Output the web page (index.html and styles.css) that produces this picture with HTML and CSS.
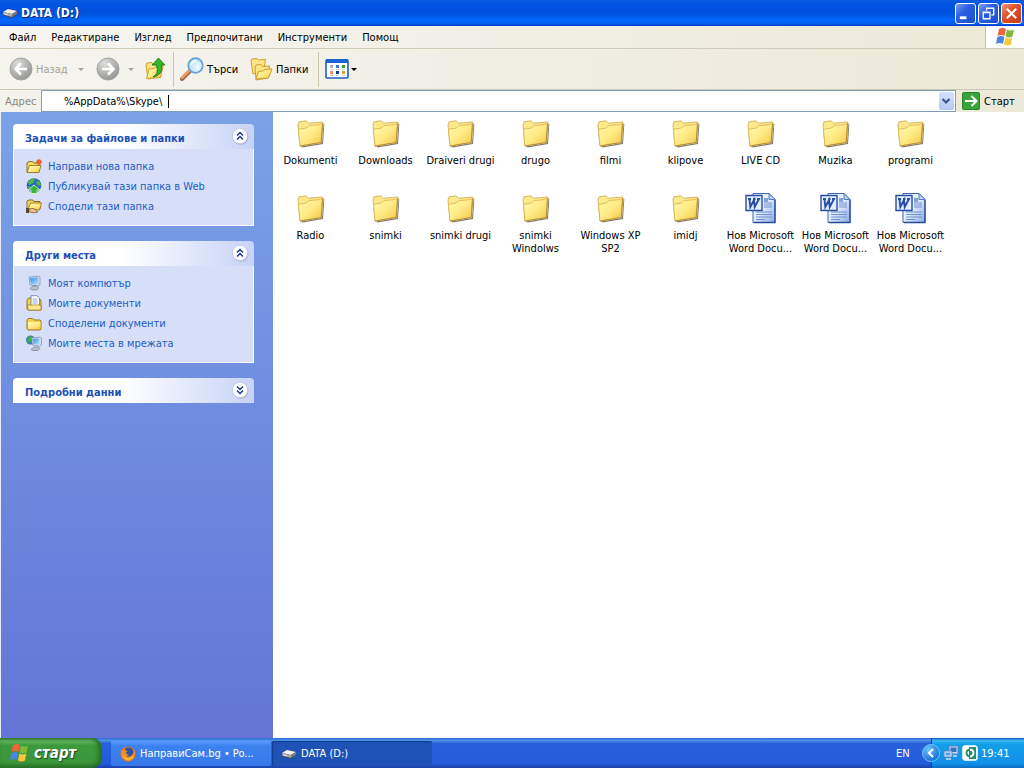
FILE: index.html
```html
<!DOCTYPE html>
<html lang="bg">
<head>
<meta charset="utf-8">
<title>DATA (D:)</title>
<link rel="stylesheet" href="styles.css">
</head>
<body>
<svg class="defs" aria-hidden="true">
  <defs>
    <linearGradient id="gFolder" x1="0" y1="0" x2="1" y2="1"><stop offset="0" stop-color="#fffbb4"/><stop offset=".5" stop-color="#ffeb86"/><stop offset="1" stop-color="#f1c645"/></linearGradient>
    <linearGradient id="gPage" x1="0" y1="0" x2="1" y2="1"><stop offset="0" stop-color="#fff"/><stop offset=".5" stop-color="#dfeaff"/><stop offset="1" stop-color="#88a9e4"/></linearGradient>
    <radialGradient id="gGrey" cx=".35" cy=".25" r=".85"><stop offset="0" stop-color="#dedede"/><stop offset=".5" stop-color="#b5b5b3"/><stop offset="1" stop-color="#8f8f8d"/></radialGradient>
    <radialGradient id="gLens" cx=".65" cy=".6" r=".7"><stop offset="0" stop-color="#f4fdff"/><stop offset="1" stop-color="#a6d8f8"/></radialGradient>
    <linearGradient id="gScreen" x1="0" y1="0" x2="1" y2="1"><stop offset="0" stop-color="#3c8be6"/><stop offset="1" stop-color="#b4e4ff"/></linearGradient>
    <radialGradient id="gTray" cx=".35" cy=".3" r=".8"><stop offset="0" stop-color="#6cc4ff"/><stop offset="1" stop-color="#0964d0"/></radialGradient>
  </defs>
  <symbol id="folder" viewBox="0 0 32 32">
    <path d="M6 29.500l21-3.500 1.500-19.500.8.500-1.300 20-20.500 3.500z" fill="#5d5540" opacity=".8"/>
    <path d="M3 8l1-3.200 7-1 2.500 2.400 14-1.200.5 1-1.500 19L5 29z" fill="#fbe98b" stroke="#cba94c" stroke-width=".8"/>
    <path d="M3.500 12.300l8-1.300 2.500-2.500 10-.8 3.500-1.400-1.300 19.200L5 29z" fill="url(#gFolder)" stroke="#dcb047" stroke-width=".8"/>
    <path d="M5 29l21.200-3.500L27.500 6.500" stroke="#a88432" stroke-width=".8" fill="none"/>
  </symbol>
  <symbol id="word" viewBox="0 0 32 32">
    <path d="M8 1.500h16l6 6v23H8z" fill="url(#gPage)" stroke="#3f66b3"/>
    <path d="M30 8v22.500H9" fill="none" stroke="#274b9b" stroke-width="1.300"/>
    <path d="M24 1.500v6h6z" fill="#bcd2f8" stroke="#3f66b3" stroke-width=".8"/>
    <path d="M19 11h8M19 13h8M19 15h8M11 20h16M11 22.500h16M11 25h16M11 27.500h9" stroke="#7292cc"/>
    <path d="M19 6h4v4h-4z" fill="#83a3df"/>
    <path d="M1 3.500h16v15H1z" fill="#e5efff" stroke="#274da4" stroke-width="1.400"/>
    <path d="M3 7h3M4.500 7l.8 8L9 8l.7 7L14 7h-2M8 7h2.500" fill="none" stroke="#2a4da5" stroke-width="1.900"/>
  </symbol>
  <symbol id="drive" viewBox="0 0 16 16">
    <path d="M1 7l5-3 9 2v3l-5 4-9-3z" fill="#444"/>
    <path d="M1 7l5-3 9 2-5 3z" fill="#f2f2ef"/>
    <path d="M1 7l9 2v3L1 9.500z" fill="#aaa"/><path d="M10 9l5-3v3l-5 3z" fill="#777"/>
    <path d="M2.500 9l3 .8" stroke="#eee"/>
  </symbol>
  <symbol id="flag" viewBox="0 0 20 20">
    <path d="M4 2q4-2 7 0L9.500 9q-3-2-7 0z" fill="#ee6537"/>
    <path d="M12 2.500q3 2 7 0L17.500 9.500q-4 2-7 0z" fill="#7fb83b"/>
    <path d="M2.300 10q4-2 7 0L8 17q-3-2-7 0z" fill="#4a85dc"/>
    <path d="M10.300 10.500q3 2 7 0L16 17.500q-4 2-7 0z" fill="#f9c73c"/>
  </symbol>
  <symbol id="chevs" viewBox="0 0 18 18">
    <circle cx="9.500" cy="9.800" r="8" fill="#7e8bbd" opacity=".5"/>
    <circle cx="9" cy="9" r="7.700" fill="#fff" stroke="#b5bfdf" stroke-width=".7"/>
    <path d="M6 8.500l3-3 3 3M6 12.500l3-3 3 3" fill="none" stroke="#173b92" stroke-width="1.500"/>
  </symbol>
  <symbol id="smallfolder" viewBox="0 0 16 16">
    <path d="M1 13.500V5l1.500-1.500h4L8 5h6l1 1v8l-1 1H2z" fill="#f5d250" stroke="#9c7416"/>
    <path d="M2 7h12.500v7H2z" fill="url(#gFolder)"/>
  </symbol>
  <symbol id="newfolder" viewBox="0 0 16 16">
    <path d="M1 14V5l2-1.500h3.500L8 5h5v9z" fill="#f6d763" stroke="#8e6a1a"/>
    <path d="M1 14.500l2.500-7H15l-2 7z" fill="url(#gFolder)" stroke="#8e6a1a" stroke-width=".8"/>
    <path d="M13 1v6M10 4h6M11 2l4 4M15 2l-4 4" stroke="#e8632b" stroke-width="1.300"/>
  </symbol>
  <symbol id="web" viewBox="0 0 16 16">
    <circle cx="8" cy="7.500" r="7.300" fill="#2866bc"/>
    <path d="M2 4q3-4 7-3l-2 4-4 2zM10 3l4 1 1 4-4-1zM1 8l4 1v4z" fill="#55b843"/>
    <path d="M8 7l6 5h-3v3.500H5V12H2z" fill="#35b634" stroke="#e4f7df" stroke-width=".8"/>
  </symbol>
  <symbol id="share" viewBox="0 0 16 16">
    <path d="M1 11V3l2-1h4l1 1.500h6V11z" fill="#f6d763" stroke="#8e6a1a"/>
    <path d="M2 11l2.500-6H15.500l-2 7z" fill="url(#gFolder)" stroke="#8e6a1a" stroke-width=".8"/>
    <path d="M0 10h3v5H0z" fill="#5b4a33"/><path d="M3 11l5-.5 4 3.500-4 .8-5-1z" fill="#f0c08b" stroke="#6f4a24" stroke-width=".7"/>
  </symbol>
  <symbol id="computer" viewBox="0 0 16 16">
    <path d="M3 2l9-1 2 1v8l-2 1-8-1z" fill="#d2dcec" stroke="#7c8db0" stroke-width=".7"/>
    <path d="M4 3l8-.7.5 7.700L5 9z" fill="url(#gScreen)"/>
    <path d="M7 11h4l2 2-2 2H6l-2-1.500z" fill="#b9bfcd" stroke="#6d7486" stroke-width=".6"/>
  </symbol>
  <symbol id="docs" viewBox="0 0 16 16">
    <path d="M1 14V5l1.500-2H5l1 1h8l1 2v9H2z" fill="#f5d250" stroke="#9c7416"/>
    <path d="M5 .7h6L13.500 3v8H5z" fill="#fff" stroke="#5a76ad" stroke-width=".8"/>
    <path d="M6.500 4h5M6.500 6h5M6.500 8h5" stroke="#7696d0" stroke-width=".8"/>
    <path d="M1.500 10h13.500v5H2z" fill="#fce98d" stroke="#9c7416" stroke-width=".7"/>
  </symbol>
  <symbol id="net" viewBox="0 0 16 16">
    <circle cx="4.500" cy="5" r="4.500" fill="#2f7bc4"/><path d="M1 4l3-3 3 2-2 4-3 1z" fill="#43ae45"/>
    <path d="M5.500 3l8-1 2 1v7l-2 1.300-7-1.300z" fill="#d2dcec" stroke="#7c8db0" stroke-width=".7"/>
    <path d="M6.500 4l6.500-.8.500 6.500L7.500 9z" fill="url(#gScreen)"/>
    <path d="M8 12h4l2 1.500-2 2H7l-2-1z" fill="#b9bfcd" stroke="#6d7486" stroke-width=".6"/>
  </symbol>
</svg>

<div class="window">
  <header class="titlebar">
    <svg class="i16"><use href="#drive"/></svg>
    <h1 class="title">DATA (D:)</h1>
    <div class="winbtns">
      <button class="winbtn" aria-label="Minimize"><svg viewBox="0 0 20 20"><path d="M4 13h7v3H4z" fill="#fff"/></svg></button>
      <button class="winbtn" aria-label="Restore"><svg viewBox="0 0 20 20"><path d="M8 7V4.500h7.500v7H13M7.500 4.500h8.500" fill="none" stroke="#fff" stroke-width="1.400"/><path d="M4.500 8.500h7v7h-7zM4 9h8" fill="none" stroke="#fff" stroke-width="1.400"/></svg></button>
      <button class="winbtn close" aria-label="Close"><svg viewBox="0 0 20 20"><path d="M5 5l10 10M15 5L5 15" stroke="#fff" stroke-width="2.200"/></svg></button>
    </div>
  </header>

  <nav class="menubar">
    <button>Файл</button><button>Редактиране</button><button>Изглед</button><button>Предпочитани</button><button>Инструменти</button><button>Помощ</button>
    <div class="brand"><svg class="i20"><use href="#flag"/></svg></div>
  </nav>

  <div class="toolbar">
    <button class="tool back" disabled>
      <svg class="i24" viewBox="0 0 24 24"><circle cx="12" cy="12" r="11" fill="url(#gGrey)" stroke="#a3a3a1"/><path d="M18 12H7M12 6.500L6.500 12l5.500 5.500" fill="none" stroke="#fff" stroke-width="2.600"/></svg>
      <span>Назад</span><i class="arrow"></i>
    </button>
    <button class="tool forward" disabled aria-label="Напред">
      <svg class="i24" viewBox="0 0 24 24"><circle cx="12" cy="12" r="11" fill="url(#gGrey)" stroke="#a3a3a1"/><path d="M6 12h11M12 6.500l5.500 5.500-5.500 5.500" fill="none" stroke="#fff" stroke-width="2.600"/></svg>
      <i class="arrow"></i>
    </button>
    <button class="tool up" aria-label="Нагоре">
      <svg class="i24" viewBox="0 0 24 24"><path d="M3 8l1-2 5-.5 1.500 2L20 7l-2.500 13L5 22z" fill="#fbe486" stroke="#cf9f2d"/><path d="M3.500 21.500L6 12l5-.5 2-1.500 7-.5-2.500 11z" fill="url(#gFolder)" stroke="#cf9f2d"/><path d="M10 20q6-3 3.500-12H9l6.500-7L22 8h-3.500q2 10-8.500 12z" fill="#35b22e" stroke="#167318" stroke-width=".8"/></svg>
    </button>
    <span class="sep"></span>
    <button class="tool search">
      <svg class="i24" viewBox="0 0 24 24"><path d="M10 14l-8 8" stroke="#a8643a" stroke-width="4" stroke-linecap="round"/><path d="M9.500 13.500l-7.500 7.500" stroke="#f0a36b" stroke-width="2" stroke-linecap="round"/><circle cx="15.500" cy="8.500" r="7.300" fill="url(#gLens)" stroke="#6b9fd6" stroke-width="1.700"/><path d="M11 8q1-4 5-4" fill="none" stroke="#fff" stroke-width="1.500"/></svg>
      <span>Търси</span>
    </button>
    <button class="tool folders">
      <svg class="i24" viewBox="0 0 24 24"><path d="M2 4l1-2 5-.5L9.500 3l7-.5-2 12L4 17z" fill="#fbe486" stroke="#cf9f2d"/><path d="M6 10l1-2 5-.5 1.500 2 7-.5-1.500 12-12 2z" fill="#fbe486" stroke="#cf9f2d"/><path d="M7 22l2.500-7.500 4.500-.5 2-1.500 7-.5-3.500 9z" fill="url(#gFolder)" stroke="#cf9f2d"/></svg>
      <span>Папки</span>
    </button>
    <span class="sep"></span>
    <button class="tool views" aria-label="Изгледи">
      <svg class="i24" viewBox="0 0 24 24"><rect x="1" y="3" width="22" height="18" rx="1" fill="#fff" stroke="#1f5fc0" stroke-width="1.600"/><path d="M1 2h22v4H1z" fill="#1c62cf"/><g><path d="M5 8h3v3H5z" fill="#a8aec4"/><path d="M11 8h3v3h-3z" fill="#3e76d8"/><path d="M17 8h3v3h-3z" fill="#36962f"/><path d="M5 14h3v3H5z" fill="#f0876a"/><path d="M11 14h3v3h-3z" fill="#16368f"/><path d="M17 14h3v3h-3z" fill="#d0a03a"/></g><path d="M5 12.500h3M11 12.500h3M17 12.500h3M5 18.500h3M11 18.500h3M17 18.500h3" stroke="#ccd"/></svg>
      <i class="arrow"></i>
    </button>
  </div>

  <div class="addressbar">
    <label for="addr">Адрес</label>
    <div class="combo">
      <input id="addr" type="text" value="%AppData%\Skype\"><span class="caret"></span>
      <button class="drop" aria-label="Разгъване"><svg viewBox="0 0 14 16"><path d="M3.500 6L7 9.500 10.500 6" fill="none" stroke="#3c5591" stroke-width="2.200"/></svg></button>
    </div>
    <button class="go"><svg viewBox="0 0 18 18"><rect width="18" height="18" rx="2" fill="#38a33b"/><rect x=".5" y=".5" width="17" height="17" rx="2" fill="none" stroke="#2a8235"/><path d="M3 9h11M9.500 4l5 5-5 5" fill="none" stroke="#fff" stroke-width="2"/></svg><span>Старт</span></button>
  </div>

  <div class="main">
    <aside class="side">
      <section class="panel">
        <button class="phead"><span>Задачи за файлове и папки</span><svg><use href="#chevs"/></svg></button>
        <div class="pbody">
          <a href="#"><svg class="i16"><use href="#newfolder"/></svg>Направи нова папка</a>
          <a href="#"><svg class="i16"><use href="#web"/></svg>Публикувай тази папка в Web</a>
          <a href="#"><svg class="i16"><use href="#share"/></svg>Сподели тази папка</a>
        </div>
      </section>
      <section class="panel">
        <button class="phead"><span>Други места</span><svg><use href="#chevs"/></svg></button>
        <div class="pbody">
          <a href="#"><svg class="i16"><use href="#computer"/></svg>Моят компютър</a>
          <a href="#"><svg class="i16"><use href="#docs"/></svg>Моите документи</a>
          <a href="#"><svg class="i16"><use href="#smallfolder"/></svg>Споделени документи</a>
          <a href="#"><svg class="i16"><use href="#net"/></svg>Моите места в мрежата</a>
        </div>
      </section>
      <section class="panel">
        <button class="phead"><span>Подробни данни</span><svg viewBox="0 0 18 18"><circle cx="9.500" cy="9.800" r="8" fill="#7e8bbd" opacity=".5"/><circle cx="9" cy="9" r="7.700" fill="#fff" stroke="#b5bfdf" stroke-width=".7"/><path d="M6 5.500l3 3 3-3M6 9.500l3 3 3-3" fill="none" stroke="#173b92" stroke-width="1.500"/></svg></button>
      </section>
    </aside>

    <main class="files">
      <div class="file"><svg><use href="#folder"/></svg><span>Dokumenti</span></div>
      <div class="file"><svg><use href="#folder"/></svg><span>Downloads</span></div>
      <div class="file"><svg><use href="#folder"/></svg><span>Draiveri drugi</span></div>
      <div class="file"><svg><use href="#folder"/></svg><span>drugo</span></div>
      <div class="file"><svg><use href="#folder"/></svg><span>filmi</span></div>
      <div class="file"><svg><use href="#folder"/></svg><span>klipove</span></div>
      <div class="file"><svg><use href="#folder"/></svg><span>LIVE CD</span></div>
      <div class="file"><svg><use href="#folder"/></svg><span>Muzika</span></div>
      <div class="file"><svg><use href="#folder"/></svg><span>programi</span></div>
      <div class="file"><svg><use href="#folder"/></svg><span>Radio</span></div>
      <div class="file"><svg><use href="#folder"/></svg><span>snimki</span></div>
      <div class="file"><svg><use href="#folder"/></svg><span>snimki drugi</span></div>
      <div class="file"><svg><use href="#folder"/></svg><span>snimki<br>Windolws</span></div>
      <div class="file"><svg><use href="#folder"/></svg><span>Windows XP<br>SP2</span></div>
      <div class="file"><svg><use href="#folder"/></svg><span>imidj</span></div>
      <div class="file"><svg><use href="#word"/></svg><span>Нов Microsoft<br>Word Docu...</span></div>
      <div class="file"><svg><use href="#word"/></svg><span>Нов Microsoft<br>Word Docu...</span></div>
      <div class="file"><svg><use href="#word"/></svg><span>Нов Microsoft<br>Word Docu...</span></div>
    </main>
  </div>

  <footer class="taskbar">
    <button class="start"><svg class="i20"><use href="#flag"/></svg><span>старт</span></button>
    <div class="tasks">
      <button class="task"><svg class="i16" viewBox="0 0 16 16"><circle cx="8" cy="8" r="7.500" fill="#e8701a"/><circle cx="8.500" cy="6.500" r="5" fill="#2b55a8"/><path d="M1 3q-1 8 4 11 6 3 9-3 2-4 0-8 0 4-2 6-3 3-6 1 2 0 3-1.500-3 0-3-2l2-1.500Q5 5 5 3 3 3 2 5z" fill="#f58b1f"/><path d="M2 9q2 5 7 5 4-1 5-5-3 4-7 3-3-1-5-3z" fill="#fbc13a"/></svg><span>НаправиСам.bg • Po...</span></button>
      <button class="task active"><svg class="i16"><use href="#drive"/></svg><span>DATA (D:)</span></button>
    </div>
    <span class="lang">EN</span>
    <div class="tray">
      <button class="hide" aria-label="Скриване"><svg viewBox="0 0 18 18"><circle cx="9" cy="9" r="8.500" fill="url(#gTray)" stroke="#86d2ff" stroke-width=".8"/><path d="M11 5L7 9l4 4" fill="none" stroke="#fff" stroke-width="2"/></svg></button>
      <svg class="i16" viewBox="0 0 16 16"><path d="M6 1h9v8H6z" fill="#c8dcf5" stroke="#5f86bd"/><path d="M7.500 2.500h6V7h-6z" fill="#3471c9"/><path d="M1 6h8v6H1z" fill="#dcecff" stroke="#5f86bd"/><path d="M2.500 7.500h5v3h-5z" fill="#5b9be8"/><path d="M3 14h5M10 11h4" stroke="#cfdcf0" stroke-width="1.500"/></svg>
      <svg class="i16" viewBox="0 0 16 16"><rect x=".7" y=".7" width="14.600" height="14.600" rx="2" fill="#fff" stroke="#e5fff5"/><path d="M8 2h6v12H8z" fill="#23916d"/><path d="M8 4.500Q4.500 5 4.500 8T8 11.500" fill="none" stroke="#23916d" stroke-width="1.800"/><path d="M8 4.500Q11.500 5 11.500 8T8 11.500" fill="none" stroke="#fff" stroke-width="1.800"/><path d="M7.500 2v12" stroke="#23916d"/></svg>
      <time>19:41</time>
    </div>
  </footer>
</div>
</body>
</html>
```
FILE: styles.css
```css
* { box-sizing: border-box; }
body {
  margin: 0;
  font: 11px/13px "DejaVu Sans Condensed", "DejaVu Sans", sans-serif;
  color: #000;
}
button { font: inherit; color: inherit; border: 0; background: none; padding: 0; margin: 0; text-align: left; white-space: nowrap; }
svg { display: block; flex: none; }
.defs { position: absolute; width: 0; height: 0; }
.i16 { width: 16px; height: 16px; }
.i20 { width: 20px; height: 20px; }
.i24 { width: 24px; height: 24px; }

.window { display: flex; flex-direction: column; height: 100vh; overflow: hidden; background: #ece9d8; }

.titlebar {
  display: flex; align-items: center; gap: 3px; height: 26px; padding: 0 2px; flex: none;
  background: linear-gradient(#0a5be0, #0054e3 15%, #0050dc 50%, #0266fc 75%, #0260f4 90%, #003dc8);
}
.title { flex: 1; margin: 0; font: bold 12px/16px "DejaVu Sans Condensed", sans-serif; color: #fff; text-shadow: 1px 1px #0a2a80; }
.winbtns { display: flex; gap: 2px; }
.winbtn { width: 21px; height: 21px; border: 1px solid #fff; border-radius: 3px; background: linear-gradient(135deg, #7da0f5, #2a5ee0 40%, #1c4ed0); }
.winbtn svg { width: 19px; height: 19px; }
.winbtn.close { background: linear-gradient(135deg, #f0987e, #e2512c 40%, #c83a14); }

.menubar { display: flex; align-items: center; height: 23px; padding-left: 9px; gap: 15px; flex: none; background: linear-gradient(90deg, #f6f5f1, #ece9d8); border-bottom: 1px solid #d0ccba; }
.brand { display: flex; align-items: center; justify-content: center; align-self: stretch; width: 39px; margin-left: auto; background: #fff; border-left: 1px solid #c5c2b2; }

.toolbar { display: flex; align-items: center; height: 41px; padding-left: 9px; flex: none; background: linear-gradient(90deg, #f5f4ef, #ece9d8); border-bottom: 1px solid #cbc8b8; }
.tool { display: flex; align-items: center; gap: 3px; }
.tool:disabled { color: #a5a396; }
.arrow { width: 0; height: 0; border: 3px solid transparent; border-top-color: currentColor; border-bottom-width: 0; }
.back { width: 87px; }
.back .arrow { margin-left: 7px; }
.forward { width: 47px; gap: 8px; }
.sep { width: 1px; height: 35px; background: #c9c6ad; margin: 0 6px; }
.search { width: 69px; }
.folders { width: 63px; }
.views { gap: 2px; }

.addressbar { display: flex; align-items: center; height: 22px; padding-left: 5px; flex: none; background: linear-gradient(90deg, #f3f2ec, #ece9d8); }
.addressbar label { width: 36px; color: #8a887c; }
.combo { display: flex; align-items: center; flex: 1; height: 22px; padding: 0 1px 0 22px; background: #fff; border: 1px solid #7f9db9; }
.combo input { width: 104px; border: 0; padding: 0; font: inherit; color: inherit; background: none; outline: 0; }
.caret { width: 1px; height: 13px; background: #000; }
.drop { width: 15px; height: 18px; margin-left: auto; border-radius: 2px; background: linear-gradient(#d5e1fd, #b4c8f6); }
.drop svg { width: 14px; height: 16px; }
.go { display: flex; align-items: center; gap: 4px; width: 68px; padding-left: 6px; }
.go svg { width: 18px; height: 18px; }

.main { display: flex; flex: 1; min-height: 0; background: #fff; }
.side { display: flex; flex-direction: column; gap: 15px; width: 273px; padding: 12px 19px 0 12px; flex: none; border-left: 1px solid #e6ecf8; background: linear-gradient(#7ba2e7, #6375d6); }
.phead { display: flex; align-items: center; justify-content: space-between; width: 100%; height: 25px; padding: 0 5px 0 12px; border-radius: 4px 4px 0 0; background: linear-gradient(90deg, #fff 45%, #c6d3f7); font-weight: bold; }
.phead span { color: #1c50b8; padding-top: 3px; }
.phead svg { width: 18px; height: 18px; margin-bottom: 2px; }
.pbody { display: flex; flex-direction: column; gap: 4px; padding: 9px 12px 11px; background: #d6dff7; border: 1px solid #fff; border-top: 0; }
.pbody a { display: flex; align-items: center; gap: 6px; color: #215dc6; text-decoration: none; white-space: nowrap; }

.files { display: grid; flex: 1; grid-template-columns: repeat(auto-fill, 75px); grid-auto-rows: 75px; align-content: start; padding: 5px 16px 0 0; }
.file { display: flex; flex-direction: column; align-items: center; gap: 5px; text-align: center; white-space: nowrap; }
.file svg { width: 32px; height: 32px; }

.taskbar { display: flex; align-items: stretch; height: 30px; flex: none; color: #fff; background: linear-gradient(#3168d5, #4993e6 8%, #2860dc 18%, #245bdb 85%, #1941a5); }
.start { display: flex; align-items: center; gap: 5px; width: 102px; padding-left: 9px; border-radius: 0 10px 10px 0; background: linear-gradient(#388238, #63b563 10%, #3c9a3c 25%, #3c963c 80%, #2b752b); box-shadow: inset -3px 0 5px #1f6a1f; font: italic bold 15px/20px "DejaVu Sans Condensed", sans-serif; text-shadow: 1px 1px 1px #1c4a1c; }
.tasks { display: flex; flex: 1; gap: 1px; padding: 3px 0 2px 9px; }
.task { display: flex; align-items: center; gap: 4px; width: 160px; padding-left: 9px; border-radius: 2px; background: linear-gradient(#5c9cff, #3c81f0 20%, #3878e8); }
.task.active { background: #1e52b7; box-shadow: inset 1px 1px 1px #143c8c; }
.lang { align-self: center; width: 35px; }
.tray { display: flex; align-items: center; gap: 3px; width: 93px; border-left: 1px solid #0a4aa8; background: linear-gradient(#0c59b9, #3cb6f5 8%, #139ee9 20%, #1290e8 85%, #0c6cc0); }
.hide { margin-left: -10px; }
.hide svg { width: 18px; height: 18px; }
```
